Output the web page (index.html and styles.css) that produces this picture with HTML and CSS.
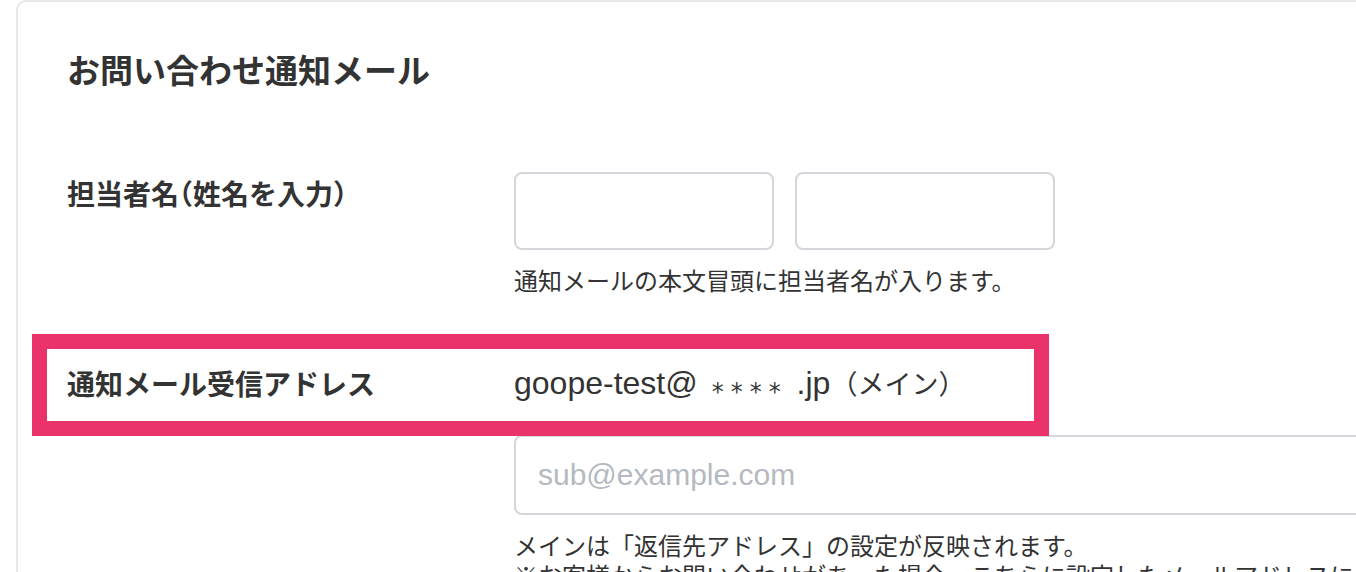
FILE: index.html
```html
<!DOCTYPE html>
<html lang="ja">
<head>
<meta charset="utf-8">
<title>お問い合わせ通知メール</title>
<link rel="stylesheet" href="styles.css">
</head>
<body>
<section class="card">
  <h1 class="card-title">お問い合わせ通知メール</h1>

  <div class="row row-name">
    <div class="row-label">担当者名<span class="paren">（</span>姓名を入力<span class="paren">）</span></div>
    <div class="row-field">
      <div class="name-inputs">
        <input class="text-input name-input" type="text" aria-label="姓">
        <input class="text-input name-input" type="text" aria-label="名">
      </div>
      <p class="help">通知メールの本文冒頭に担当者名が入ります。</p>
    </div>
  </div>

  <div class="row row-mail">
    <div class="highlight" aria-hidden="true"></div>
    <div class="row-label">通知メール受信アドレス</div>
    <div class="row-field">
      <div class="mail-main">goope-test@<span class="mask">****</span> .jp<span class="mail-tag">（メイン）</span></div>
      <input class="text-input sub-input" type="text" placeholder="sub@example.com">
      <p class="help help-lines">メインは「返信先アドレス」の設定が反映されます。<br>※お客様からお問い合わせがあった場合、こちらに設定したメールアドレスにも通知メールが送信されます。</p>
    </div>
  </div>
</section>
</body>
</html>
```

FILE: styles.css
```css
html, body {
  margin: 0;
  padding: 0;
  background: #ffffff;
  overflow: hidden;
}

body {
  font-family: "Noto Sans CJK JP", "Liberation Sans", sans-serif;
  color: #333333;
  width: 1356px;
  height: 572px;
}

.card {
  margin-left: 16px;
  width: 1500px;
  min-height: 700px;
  border: 2px solid #e8e8e8;
  border-right: none;
  border-bottom: none;
  border-radius: 10px 0 0 0;
  padding: 44px 0 0 49px;
  box-sizing: border-box;
}

.card-title {
  margin: 0 0 80px;
  font-size: 33px;
  line-height: 46px;
  font-weight: 700;
  color: #333333;
}

.row {
  display: grid;
  grid-template-columns: 447px 1fr;
}

.row-label {
  font-size: 28px;
  line-height: 42px;
  font-weight: 700;
  color: #333333;
  white-space: nowrap;
}

.paren {
  font-feature-settings: "halt" 1;
}

.name-inputs {
  display: flex;
  gap: 21px;
}

.text-input {
  box-sizing: border-box;
  border: 2px solid #d3d6db;
  border-radius: 8px;
  background: #ffffff;
  margin: 0;
  outline: none;
  font-family: "Liberation Sans", "Noto Sans CJK JP", sans-serif;
  color: #333333;
}

.name-input {
  width: 260px;
  height: 78px;
}

.help {
  margin: 15px 0 0;
  font-size: 24px;
  line-height: 30px;
  color: #333333;
  white-space: nowrap;
}

.row-mail {
  position: relative;
  margin-top: 68px;
}

.row-mail .row-label {
  line-height: 40px;
}

.mail-main {
  font-family: "Liberation Sans", "Noto Sans CJK JP", sans-serif;
  font-size: 32px;
  line-height: 40px;
  height: 40px;
  color: #333333;
  white-space: nowrap;
}

.mask {
  font-family: "DejaVu Sans", sans-serif;
  font-size: 24px;
  line-height: 1;
  letter-spacing: 7px;
  color: #3a3a3a;
  margin-left: 14px;
  vertical-align: -6px;
}

.mail-tag {
  font-family: "Noto Sans CJK JP", sans-serif;
  font-size: 27px;
  line-height: 1;
  letter-spacing: 0;
}

.sub-input {
  display: block;
  margin-top: 32px;
  width: 900px;
  height: 80px;
  padding: 0 22px;
  font-size: 30px;
}

.sub-input::placeholder {
  color: #b5b9c0;
}

.highlight {
  position: absolute;
  top: -29px;
  left: -35px;
  width: 1017px;
  height: 102px;
  box-sizing: border-box;
  border: 15px solid #ea336a;
  pointer-events: none;
  z-index: 2;
}
```
